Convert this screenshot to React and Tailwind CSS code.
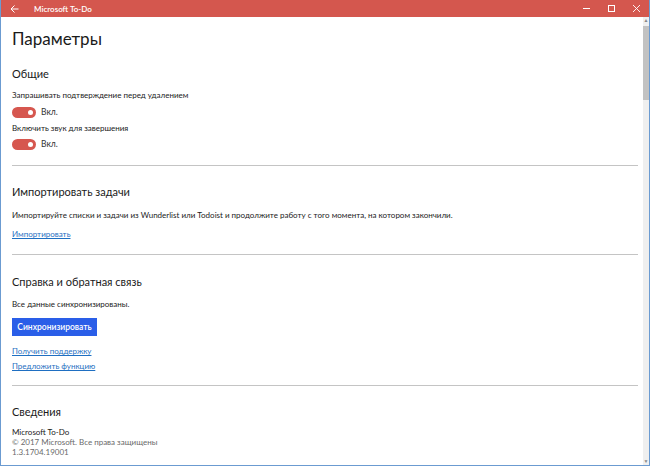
import React from "react";

const Toggle = () => (
  <div className="flex items-center gap-[5px] h-[18px]">
    <div className="w-[24px] h-[11px] rounded-full bg-[#d6574f] flex items-center justify-end pr-[3px]">
      <div className="w-[5px] h-[5px] rounded-full bg-white" />
    </div>
    <span className="text-[8.5px] text-[#333]">Вкл.</span>
  </div>
);

const Divider = () => <div className="h-px bg-[#c4c4c4] mr-[5px]" />;

const LinkText = ({ children }) => (
  <a className="text-[8px] text-[#1f6fc2] underline w-fit cursor-pointer">{children}</a>
);

const Line = ({ h, className = "", children }) => (
  <div className={`flex items-center ${h} ${className}`}>{children}</div>
);

export default function App() {
  return (
    <div
      className="w-[650px] h-[466px] flex flex-col bg-white border-l border-r border-b border-[#6b9bd1] overflow-hidden"
      style={{ fontFamily: 'Lato, "Noto Sans", sans-serif' }}
    >
      {/* title bar */}
      <div className="h-[17px] bg-[#d4574e] flex items-center text-white shrink-0">
        <svg className="ml-[9px]" width="9" height="8" viewBox="0 0 9 8" fill="none" stroke="white" strokeWidth="1">
          <path d="M8.5 4H1M4.5 0.5L1 4L4.5 7.5" />
        </svg>
        <span className="ml-[15px] text-[8px] font-semibold">Microsoft To-Do</span>
        <div className="ml-auto flex items-center">
          <div className="w-[25px] flex justify-center">
            <div className="w-[7px] h-px bg-white" />
          </div>
          <div className="w-[25px] flex justify-center">
            <div className="w-[7px] h-[7px] border border-white" />
          </div>
          <div className="w-[25px] flex justify-center">
            <svg width="7" height="7" viewBox="0 0 7 7" stroke="white" strokeWidth="0.9">
              <path d="M0 0L7 7M7 0L0 7" />
            </svg>
          </div>
        </div>
      </div>

      <div className="flex flex-1 min-h-0">
        {/* content */}
        <div className="flex-1 pl-[11px] flex flex-col text-[#1a1a1a] leading-none">
          <Line h="h-[42px]">
            <h1 className="text-[17px]">Параметры</h1>
          </Line>

          <Line h="h-[28px]">
            <h2 className="text-[11px]">Общие</h2>
          </Line>
          <Line h="h-[16px]">
            <p className="text-[8px]">Запрашивать подтверждение перед удалением</p>
          </Line>
          <Toggle />
          <Line h="h-[14px]">
            <p className="text-[8px]">Включить звук для завершения</p>
          </Line>
          <Toggle />
          <div className="mt-[12px]"><Divider /></div>

          <Line h="h-[20px]" className="mt-[15px]">
            <h2 className="text-[11px]">Импортировать задачи</h2>
          </Line>
          <Line h="h-[28px]">
            <p className="text-[8px]">
              Импортируйте списки и задачи из Wunderlist или Todoist и продолжите работу с того момента, на котором закончили.
            </p>
          </Line>
          <Line h="h-[10px]">
            <LinkText>Импортировать</LinkText>
          </Line>
          <div className="mt-[15px]"><Divider /></div>

          <Line h="h-[20px]" className="mt-[16px]">
            <h2 className="text-[11px]">Справка и обратная связь</h2>
          </Line>
          <Line h="h-[26px]">
            <p className="text-[8px]">Все данные синхронизированы.</p>
          </Line>
          <button className="mt-[1px] w-[85px] h-[18px] bg-[#2a5ee8] text-white text-[8.5px] font-semibold flex items-center justify-center">
            Синхронизировать
          </button>
          <Line h="h-[18px]" className="mt-[6px]">
            <LinkText>Получить поддержку</LinkText>
          </Line>
          <Line h="h-[12px]">
            <LinkText>Предложить функцию</LinkText>
          </Line>
          <div className="mt-[13px]"><Divider /></div>

          <Line h="h-[20px]" className="mt-[15px]">
            <h2 className="text-[11px]">Сведения</h2>
          </Line>
          <Line h="h-[11px]" className="mt-[5px]">
            <p className="text-[8px]">Microsoft To-Do</p>
          </Line>
          <Line h="h-[10px]">
            <p className="text-[8px] text-[#6a6a6a]">© 2017 Microsoft. Все права защищены</p>
          </Line>
          <Line h="h-[10px]">
            <p className="text-[8px] text-[#6a6a6a]">1.3.1704.19001</p>
          </Line>
        </div>

        {/* scrollbar */}
        <div className="w-[6px] bg-[#efefef] flex flex-col items-center">
          <div className="text-[5px] leading-none text-[#888] mt-[1px]">▲</div>
          <div className="w-full h-[74px] bg-[#c2c2c2] mt-[3px]" />
          <div className="flex-1" />
          <div className="text-[5px] leading-none text-[#888] mb-[1px]">▼</div>
        </div>
      </div>
    </div>
  );
}
